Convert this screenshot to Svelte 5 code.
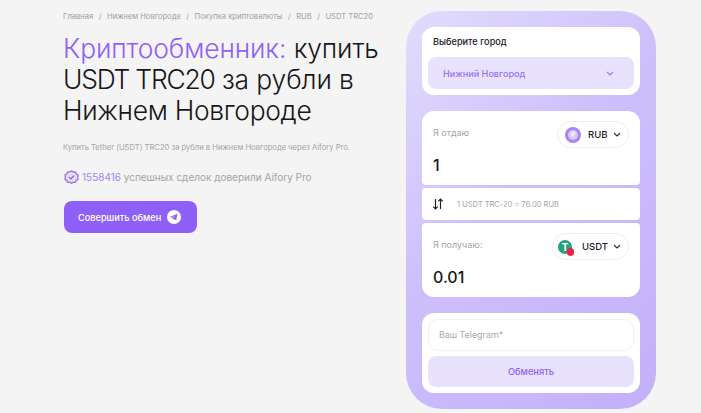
<script>
  const crumbs = ["Главная", "Нижнем Новгороде", "Покупка криптовалюты", "RUB", "USDT TRC20"];
</script>

<div class="page">
  <section class="intro">
    <nav class="crumbs">
      {#each crumbs as c, i}
        {#if i > 0}<span class="sep">/</span>{/if}
        <span>{c}</span>
      {/each}
    </nav>

    <h1><span class="accent">Криптообменник:</span> купить <span class="latin">USDT TRC20</span> за рубли в <span class="city-name">Нижнем Новгороде</span></h1>

    <p class="sub">Купить Tether (USDT) TRC20 за рубли в Нижнем Новгороде через Aifory Pro.</p>

    <div class="deals">
      <svg width="15" height="15" viewBox="0 0 16 16" fill="none">
        <path d="M8 1l1.900 1.200 2.300-.1.900 2 1.900 1.300-.5 2.200.5 2.200-1.900 1.300-.9 2-2.300-.1L8 14.200 6.100 13l-2.300.1-.9-2L1 9.800l.5-2.200L1 5.400l1.900-1.300.9-2 2.300.1z" stroke="#9a7fe0" stroke-width="1.500" fill="#e6dcfb" stroke-linejoin="round" />
        <path d="M5.500 7.800l1.800 1.700 3.200-3.200" stroke="#7a5cc8" stroke-width="1.200" stroke-linecap="round" stroke-linejoin="round" />
      </svg>
      <span><b>1558416</b> успешных сделок доверили Aifory Pro</span>
    </div>

    <button class="cta">
      Совершить обмен
      <svg width="14" height="14" viewBox="0 0 14 14">
        <circle cx="7" cy="7" r="7" fill="#fff" />
        <path d="M2.800 6.900l7.600-3.100-1.200 6.700-2.300-1.700-1.200 1.100-.2-1.800 3.200-2.800-4 2.500z" fill="#8f60f7" />
      </svg>
    </button>
  </section>

  <aside class="panel">
    <div class="card city">
      <div class="city-title">Выберите город</div>
      <div class="select">
        <span>Нижний Новгород</span>
        <svg width="8" height="5" viewBox="0 0 8 5" fill="none"><path d="M1 1l3 3 3-3" stroke="#9b7bf0" stroke-width="1.200" /></svg>
      </div>
    </div>

    <div class="stack">
      <div class="card amount">
        <div class="row">
          <span class="label">Я отдаю</span>
          <div class="pick">
            <span class="coin rub"><i>₽</i></span>
            <strong>RUB</strong>
            <svg width="8" height="5" viewBox="0 0 8 5" fill="none"><path d="M1 1l3 3 3-3" stroke="#333" stroke-width="1.100" /></svg>
          </div>
        </div>
        <div class="value">1</div>
      </div>

      <div class="card rate">
        <svg width="12" height="12" viewBox="0 0 12 12" fill="none" stroke="#222" stroke-width="1.200">
          <path d="M3.500 1v10M1.200 8.700l2.300 2.300 2.300-2.300" />
          <path d="M8.500 11V1M6.200 3.300L8.500 1l2.300 2.300" />
        </svg>
        <span>1 USDT TRC-20 = 76.00 RUB</span>
      </div>

      <div class="card amount get">
        <div class="row">
          <span class="label">Я получаю:</span>
          <div class="pick wide">
            <span class="coin usdt"><i>T</i><em></em></span>
            <strong>USDT</strong>
            <svg width="8" height="5" viewBox="0 0 8 5" fill="none"><path d="M1 1l3 3 3-3" stroke="#333" stroke-width="1.100" /></svg>
          </div>
        </div>
        <div class="value">0.01</div>
      </div>
    </div>

    <div class="card form">
      <div class="field">Ваш Telegram*</div>
      <button class="swap">Обменять</button>
    </div>
  </aside>
</div>

<style>
  :global(body) {
    margin: 0;
    background: #f4f4f4;
    overflow: hidden;
  }

  .page {
    display: flex;
    justify-content: space-between;
    width: 701px;
    height: 413px;
    box-sizing: border-box;
    padding: 11px 45px 0 64px;
    font-family: Inter, "Noto Sans", sans-serif;
  }

  .intro {
    width: 322px;
  }

  .crumbs {
    display: flex;
    gap: 5.500px;
    margin-left: -1px;
    font-size: 7.600px;
    line-height: 11px;
    color: #9f9fa3;
    white-space: nowrap;
  }

  h1 {
    margin: 11px 0 0 -1px;
    font-size: 26.400px;
    line-height: 31px;
    font-weight: 300;
    letter-spacing: -0.1px;
    color: #17171a;
  }

  .accent {
    color: #8f60f7;
  }

  .latin {
    letter-spacing: -1.200px;
  }

  .city-name {
    letter-spacing: -0.3px;
  }

  .sub {
    margin: 16px 0 0 -1px;
    font-size: 7.600px;
    line-height: 11px;
    color: #a3a3a7;
    white-space: nowrap;
  }

  .deals {
    display: flex;
    align-items: center;
    gap: 3px;
    margin: 17px 0 0;
    font-size: 10px;
    line-height: 15px;
    color: #a3a3a7;
    white-space: nowrap;
  }

  .deals b {
    font-weight: 400;
    color: #a583f3;
  }

  .cta {
    display: flex;
    align-items: center;
    gap: 6px;
    width: 133px;
    height: 32px;
    margin-top: 16px;
    padding: 0 0 0 14px;
    border: 0;
    border-radius: 8px;
    background: #8f60f7;
    color: #fff;
    font: 500 9.200px Inter, sans-serif;
  }

  .panel {
    display: flex;
    flex-direction: column;
    gap: 16px;
    width: 250px;
    height: 398px;
    box-sizing: border-box;
    padding: 16px;
    border-radius: 36px;
    background: linear-gradient(135deg, #e3dcfd 0%, #cdbffb 45%, #c3b0fa 100%);
  }

  .card {
    background: #fff;
    border-radius: 12px;
    box-sizing: border-box;
  }

  .city {
    height: 68px;
    padding: 9px 6px 6px;
  }

  .city-title {
    padding-left: 5px;
    font-size: 9.200px;
    line-height: 12px;
    font-weight: 500;
    color: #17171a;
  }

  .select {
    display: flex;
    align-items: center;
    justify-content: space-between;
    height: 32px;
    margin-top: 9px;
    padding: 0 20px 0 15px;
    border-radius: 8px;
    background: #e9e2fd;
    font-size: 9.100px;
    font-weight: 500;
    color: #9a70f5;
  }

  .stack {
    display: flex;
    flex-direction: column;
    gap: 3px;
  }

  .amount {
    height: 74px;
    padding: 10px 11px 0;
    border-radius: 12px 12px 4px 4px;
  }

  .get {
    border-radius: 4px 4px 12px 12px;
  }

  .row {
    display: flex;
    align-items: center;
    justify-content: space-between;
  }

  .label {
    margin-top: -4px;
    font-size: 9px;
    color: #a4a4a8;
  }

  .pick {
    display: flex;
    align-items: center;
    width: 72px;
    height: 27px;
    box-sizing: border-box;
    padding: 0 7px;
    border: 1px solid #ededf0;
    border-radius: 14px;
    font-size: 9.500px;
    color: #1b1b1f;
  }

  .pick.wide {
    width: 77px;
    padding-left: 5px;
  }

  .pick strong {
    flex: 1;
    font-weight: 500;
    padding-left: 7px;
  }

  .pick.wide strong {
    padding-left: 10px;
  }

  .coin {
    position: relative;
    display: grid;
    place-items: center;
    flex: none;
    width: 16px;
    height: 16px;
    border-radius: 50%;
  }

  .coin i {
    font-style: normal;
    font-size: 7px;
    line-height: 1;
  }

  .rub {
    background: #a983f5;
  }

  .rub i {
    display: grid;
    place-items: center;
    width: 10px;
    height: 10px;
    border-radius: 50%;
    background: #d9c9fb;
    color: #fff;
    font-size: 6px;
  }

  .usdt {
    width: 14px;
    height: 14px;
    background: #26a17b;
  }

  .usdt i {
    color: #fff;
    font-size: 10px;
    font-weight: 700;
  }

  .usdt em {
    position: absolute;
    right: -2px;
    bottom: -2px;
    width: 7.500px;
    height: 7.500px;
    border-radius: 50%;
    background: #ef1f45;
  }

  .value {
    margin-top: 7px;
    font-size: 16px;
    line-height: 20px;
    font-weight: 500;
    color: #17171a;
  }

  .rate {
    display: flex;
    align-items: center;
    gap: 13px;
    height: 32px;
    padding-left: 10px;
    border-radius: 4px;
    font-size: 7.500px;
    color: #a4a4a8;
  }

  .form {
    display: flex;
    flex-direction: column;
    gap: 5px;
    height: 80px;
    padding: 6px;
    border-radius: 12px;
  }

  .field {
    display: flex;
    align-items: center;
    height: 32px;
    box-sizing: border-box;
    padding-left: 10px;
    border: 1px solid #f1f1f3;
    border-radius: 10px;
    font-size: 8.900px;
    color: #a8a8ad;
  }

  .swap {
    height: 32px;
    border: 0;
    border-radius: 8px;
    background: #e9e2fd;
    color: #8f60f7;
    font: 500 9.300px Inter, sans-serif;
  }
</style>
